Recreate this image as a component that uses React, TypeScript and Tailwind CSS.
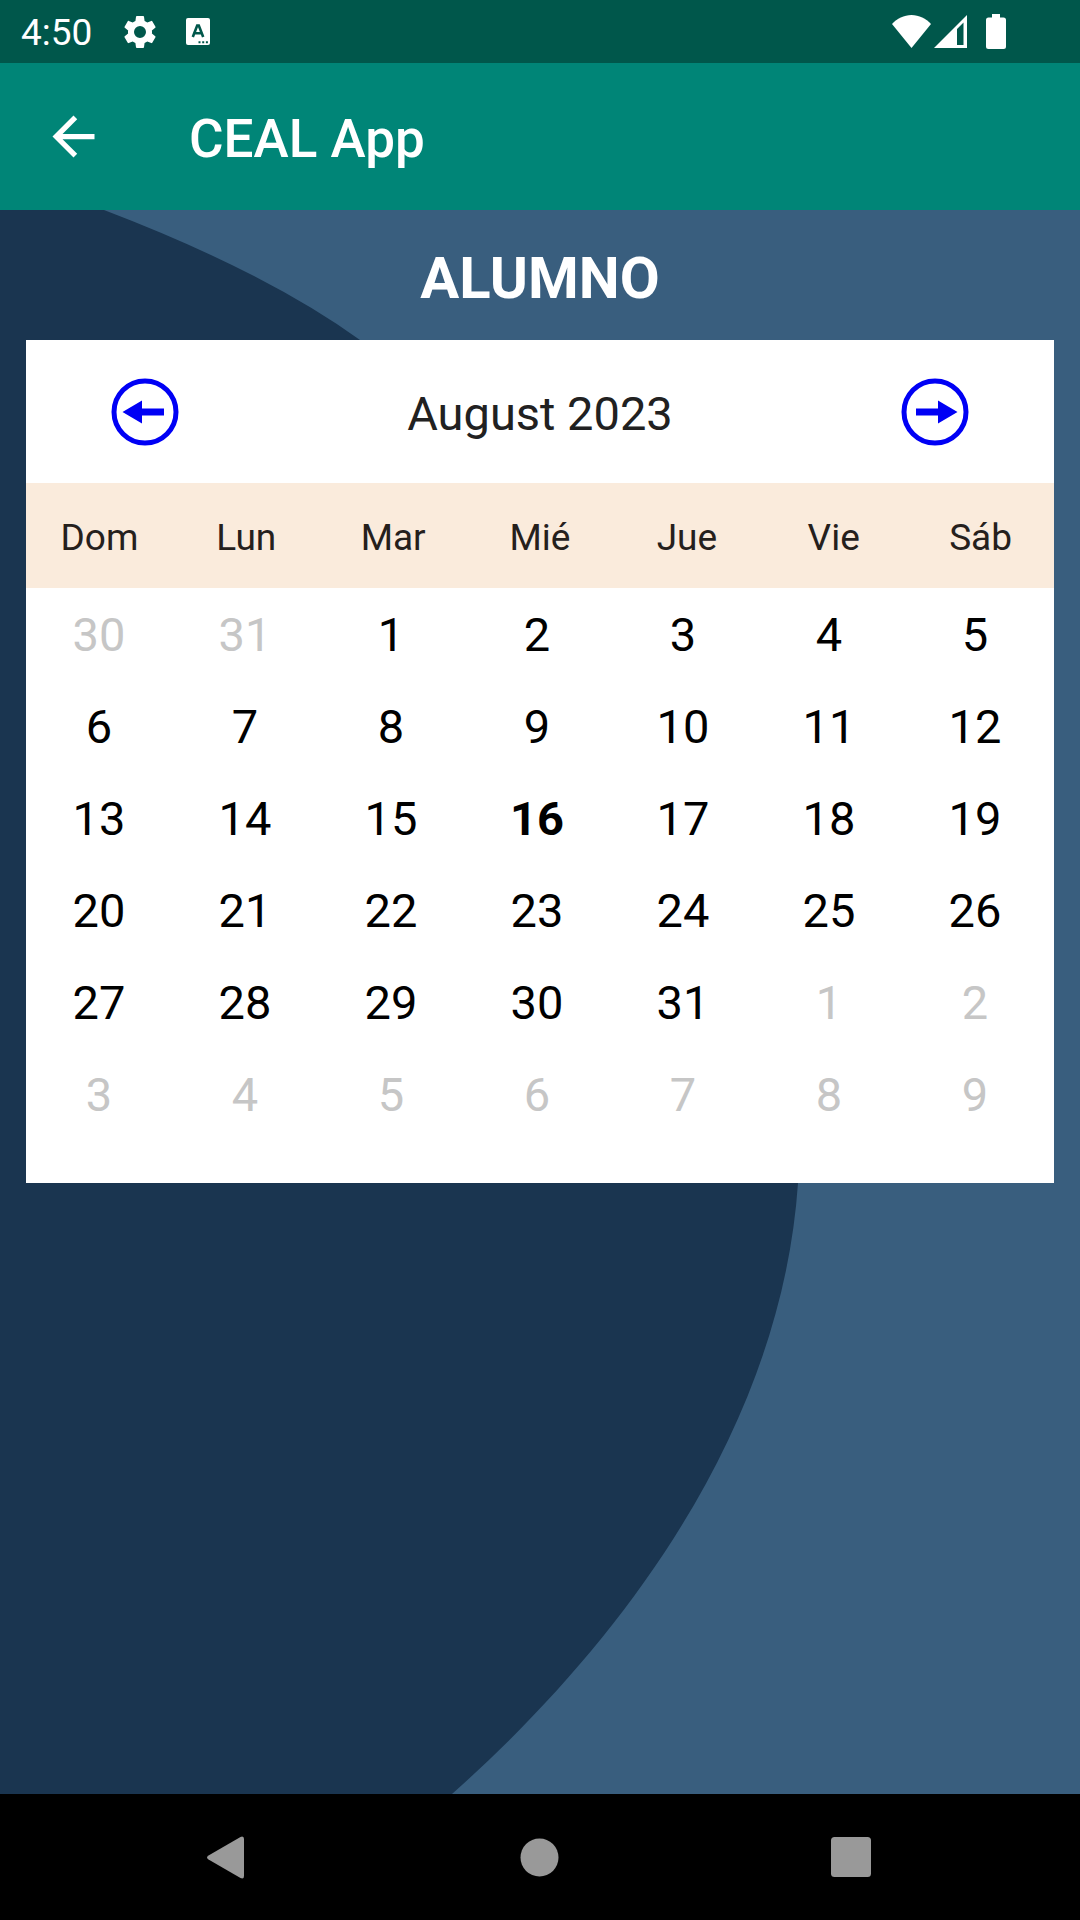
const WEEKDAYS = ["Dom", "Lun", "Mar", "Mié", "Jue", "Vie", "Sáb"];

type Day = { day: number; outside: boolean; today: boolean };

const FIRST_CELL_OFFSET = 2;
const DAYS_IN_MONTH = 31;
const DAYS_IN_PREVIOUS_MONTH = 31;
const TODAY = 16;

const WEEKS: Day[][] = Array.from({ length: 6 }, (_, week) =>
  Array.from({ length: 7 }, (_, column) => {
    const n = week * 7 + column + 1 - FIRST_CELL_OFFSET;
    if (n < 1) return { day: DAYS_IN_PREVIOUS_MONTH + n, outside: true, today: false };
    if (n > DAYS_IN_MONTH) return { day: n - DAYS_IN_MONTH, outside: true, today: false };
    return { day: n, outside: false, today: n === TODAY };
  }),
);

function dayClass({ outside, today }: Day) {
  if (outside) return "text-[#c6c6c6]";
  return today ? "font-bold text-black" : "text-black";
}

function StatusBar() {
  return (
    <div className="flex h-[63px] items-center bg-[#00574b] pl-[21px] pr-[74px] text-white">
      <span className="pt-0.5 text-[37px] leading-[43px]">4:50</span>
      <svg className="ml-7 size-10" viewBox="0 0 24 24" fill="currentColor" aria-hidden="true">
        <path d="M19.14 12.94c.04-.3.06-.61.06-.94 0-.32-.02-.64-.07-.94l2.03-1.58a.49.49 0 0 0 .12-.61l-1.92-3.32a.488.488 0 0 0-.59-.22l-2.39.96c-.5-.38-1.03-.7-1.62-.94l-.36-2.54a.484.484 0 0 0-.48-.41h-3.84c-.24 0-.43.17-.47.41l-.36 2.54c-.59.24-1.13.57-1.62.94l-2.39-.96c-.22-.08-.47 0-.59.22L2.74 8.87c-.12.21-.08.47.12.61l2.03 1.58c-.05.3-.09.63-.09.94s.02.64.07.94l-2.03 1.58a.49.49 0 0 0-.12.61l1.92 3.32c.12.22.37.29.59.22l2.39-.96c.5.38 1.03.7 1.62.94l.36 2.54c.05.24.24.41.48.41h3.84c.24 0 .44-.17.47-.41l.36-2.54c.59-.24 1.13-.56 1.62-.94l2.39.96c.22.08.47 0 .59-.22l1.92-3.32a.49.49 0 0 0-.12-.61l-2.01-1.58zM12 15.6A3.6 3.6 0 1 1 12 8.4a3.6 3.6 0 0 1 0 7.2z" />
      </svg>
      <svg className="ml-[26px] h-[27px] w-6" viewBox="0 0 24 27" aria-hidden="true">
        <rect width="24" height="27" rx="2" fill="currentColor" />
        <path
          d="M6.8 19 11.2 7.5h1.6L17.2 19M8.6 15.2h6.8"
          fill="none"
          stroke="#00574b"
          strokeWidth="2.6"
        />
        <path d="M12.5 23.2h2v2h-2zM16.2 23.2h2v2h-2zM19.9 23.2h2v2h-2z" fill="#00574b" />
      </svg>
      <div className="ml-auto flex items-center">
        <svg className="h-[33px] w-[39px]" viewBox="0 0 39 33" fill="currentColor" aria-hidden="true">
          <path d="M19.5 33 0 9C5 3.500 12 0 19.500 0S34 3.500 39 9Z" />
        </svg>
        <svg className="ml-[3px] size-[33px]" viewBox="0 0 33 33" fill="currentColor" aria-hidden="true">
          <path fillRule="evenodd" d="M0 33 33 0v33ZM23 14v16h6.500V7.500Z" />
        </svg>
        <svg className="ml-[19px] h-[35px] w-5" viewBox="0 0 20 35" fill="currentColor" aria-hidden="true">
          <path d="M6 0h8v3.500h3.500A2.500 2.500 0 0 1 20 6v26.500a2.500 2.500 0 0 1-2.500 2.500h-15A2.500 2.500 0 0 1 0 32.500V6a2.500 2.500 0 0 1 2.500-2.500H6Z" />
        </svg>
      </div>
    </div>
  );
}

function AppBar() {
  return (
    <header className="flex h-[147px] items-center gap-[84px] bg-[#008577] px-[42px] text-white">
      <button type="button" aria-label="Navigate up">
        <svg className="size-[63px]" viewBox="0 0 24 24" fill="currentColor" aria-hidden="true">
          <path d="M20 11H7.830l5.590-5.590L12 4l-8 8 8 8 1.410-1.410L7.830 13H20v-2z" />
        </svg>
      </button>
      <span className="pt-1 text-[53px] font-medium leading-[62px]">CEAL App</span>
    </header>
  );
}

function MonthArrow({ label, forward = false }: { label: string; forward?: boolean }) {
  return (
    <button type="button" aria-label={label} className="text-[#0000f5]">
      <svg
        className={forward ? "size-[68px] rotate-180" : "size-[68px]"}
        viewBox="0 0 68 68"
        aria-hidden="true"
      >
        <circle cx="34" cy="34" r="31" fill="none" stroke="currentColor" strokeWidth="5" />
        <path d="M11.500 34 31 22.500v8h22v7H31v8Z" fill="currentColor" />
      </svg>
    </button>
  );
}

function Calendar() {
  return (
    <section className="mx-[26px] bg-white pb-[42px]">
      <div className="flex h-[143px] items-center justify-between px-[85px]">
        <MonthArrow label="Previous month" />
        <h2 className="pt-1 text-[47px] leading-[56px] text-[#212121]">August 2023</h2>
        <MonthArrow label="Next month" forward />
      </div>
      <table className="block w-full text-center">
        <thead className="block bg-[#faebdc]">
          <tr className="grid h-[105px] grid-cols-7 items-center pt-1">
            {WEEKDAYS.map((name) => (
              <th key={name} scope="col" className="text-[37px] font-normal leading-[44px] text-[#25201c]">
                {name}
              </th>
            ))}
          </tr>
        </thead>
        <tbody className="block pr-1.5 pt-px">
          {WEEKS.map((week, index) => (
            <tr key={index} className="grid h-[92px] grid-cols-7 items-center">
              {week.map((cell) => (
                <td key={cell.day} className="text-[47px] leading-[56px]">
                  <button type="button" className={dayClass(cell)}>
                    {cell.day}
                  </button>
                </td>
              ))}
            </tr>
          ))}
        </tbody>
      </table>
    </section>
  );
}

function NavigationBar() {
  return (
    <nav className="grid h-[126px] grid-cols-3 items-center justify-items-center bg-black px-[73px] text-[#999999]">
      <button type="button" aria-label="Back">
        <svg className="size-[63px]" viewBox="0 0 63 63" fill="currentColor" aria-hidden="true">
          <path d="M11.500 29.500 43.500 10.900Q47 9.500 47 13V50Q47 53.500 43.500 52.100L11.500 33.500Q8.500 31.500 11.500 29.500Z" />
        </svg>
      </button>
      <button type="button" aria-label="Home">
        <svg className="size-[63px]" viewBox="0 0 63 63" fill="currentColor" aria-hidden="true">
          <circle cx="31.500" cy="31.500" r="19" />
        </svg>
      </button>
      <button type="button" aria-label="Overview">
        <svg className="size-[63px]" viewBox="0 0 63 63" fill="currentColor" aria-hidden="true">
          <rect x="11" y="11" width="40" height="40" rx="3.500" />
        </svg>
      </button>
    </nav>
  );
}

export default function App() {
  return (
    <div className="flex min-h-screen flex-col font-[Roboto,sans-serif]">
      <StatusBar />
      <AppBar />
      <main className="relative flex-1 bg-[#395e7e]">
        <svg
          className="absolute inset-0 size-full"
          viewBox="0 0 1080 1584"
          preserveAspectRatio="none"
          aria-hidden="true"
        >
          <path
            d="M0 0H104Q264 61 360 130C640 330 815 640 798 973C782 1209 634 1422 452 1584H0Z"
            fill="#1a3550"
          />
        </svg>
        <div className="relative">
          <h1 className="flex h-[130px] items-center justify-center pt-1.5 text-[58px] font-bold leading-[68px] text-white">
            ALUMNO
          </h1>
          <Calendar />
        </div>
      </main>
      <NavigationBar />
    </div>
  );
}
